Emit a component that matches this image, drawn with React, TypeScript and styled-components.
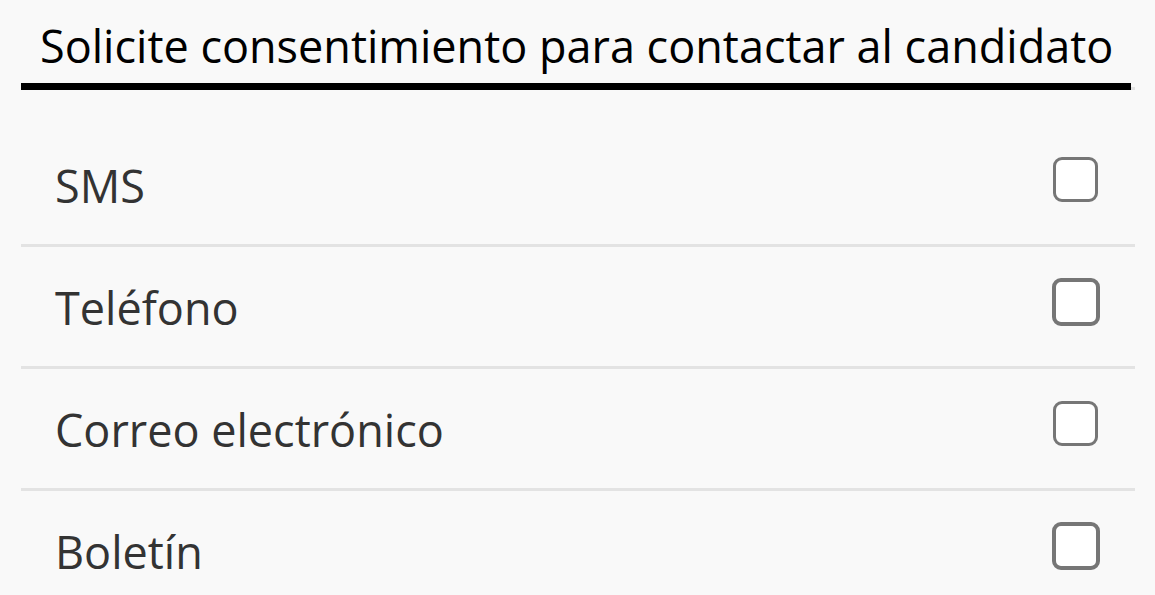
import React from "react";
import styled, { createGlobalStyle } from "styled-components";

const Global = createGlobalStyle`
  html, body { margin: 0; padding: 0; background: #f9f9f9; }
  body { font-family: "Open Sans", "Noto Sans", sans-serif; }
`;

const Panel = styled.section`
  width: 1114px;
  margin-left: 21px;
`;

const Header = styled.div`
  border-bottom: 3px solid #e3e3e3;
`;

const Title = styled.h2`
  margin: 0;
  width: 1110px;
  padding: 20px 0 11px 19px;
  box-sizing: border-box;
  font-size: 45px;
  font-weight: 400;
  line-height: 52px;
  color: #000;
  white-space: nowrap;
  border-bottom: 7px solid #000;
  margin-bottom: -3px;
`;

const List = styled.ul`
  list-style: none;
  margin: 0;
  padding: 35px 0 0;
`;

const Row = styled.li<{ $last?: boolean }>`
  display: flex;
  align-items: center;
  justify-content: space-between;
  height: 109px;
  padding: 0 35px 10px 34px;
  border-bottom: ${(p) => (p.$last ? "none" : "3px solid #e3e3e3")};
`;

const Label = styled.span`
  font-size: 45px;
  color: #333;
  line-height: 54px;
  margin-top: 12px;
`;

const Box = styled.span<{ $large?: boolean }>`
  box-sizing: border-box;
  width: ${(p) => (p.$large ? "48px" : "45px")};
  height: ${(p) => (p.$large ? "48px" : "45px")};
  margin-right: ${(p) => (p.$large ? "0" : "2px")};
  border: ${(p) => (p.$large ? "4px" : "3px")} solid #767676;
  border-radius: 9px;
  background: #fff;
  flex: none;
`;

const items = ["SMS", "Teléfono", "Correo electrónico", "Boletín"];

export default function App() {
  return (
    <>
      <Global />
      <Panel>
        <Header>
          <Title>Solicite consentimiento para contactar al candidato</Title>
        </Header>
        <List>
          {items.map((t, i) => (
            <Row key={t} $last={i === items.length - 1}>
              <Label>{t}</Label>
              <Box role="checkbox" aria-checked="false" $large={i % 2 === 1} />
            </Row>
          ))}
        </List>
      </Panel>
    </>
  );
}
